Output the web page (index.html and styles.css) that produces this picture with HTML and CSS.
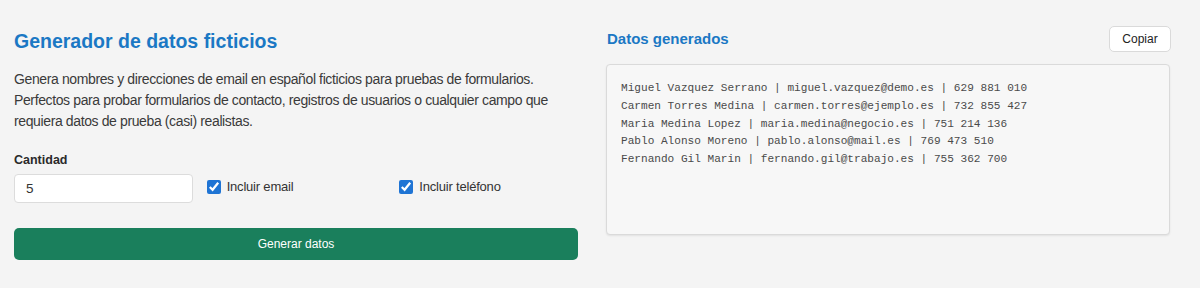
FILE: index.html
```html
<!DOCTYPE html>
<html lang="es">
<head>
<meta charset="utf-8">
<title>Generador de datos ficticios</title>
<link rel="stylesheet" href="styles.css">
</head>
<body>
<main class="page">
  <section class="form-col">
    <h1 class="title">Generador de datos ficticios</h1>
    <p class="intro">Genera nombres y direcciones de email en español ficticios para pruebas de formularios. Perfectos para probar formularios de contacto, registros de usuarios o cualquier campo que requiera datos de prueba (casi) realistas.</p>
    <label class="field-label" for="qty">Cantidad</label>
    <div class="controls">
      <input class="qty" id="qty" type="text" value="5">
      <label class="check"><input type="checkbox" checked><span>Incluir email</span></label>
      <label class="check"><input type="checkbox" checked><span>Incluir teléfono</span></label>
    </div>
    <button class="generate" type="button">Generar datos</button>
  </section>
  <section class="out-col">
    <div class="out-head">
      <h2 class="subtitle">Datos generados</h2>
      <button class="copy" type="button">Copiar</button>
    </div>
    <pre class="output">Miguel Vazquez Serrano | miguel.vazquez@demo.es | 629 881 010
Carmen Torres Medina | carmen.torres@ejemplo.es | 732 855 427
Maria Medina Lopez | maria.medina@negocio.es | 751 214 136
Pablo Alonso Moreno | pablo.alonso@mail.es | 769 473 510
Fernando Gil Marin | fernando.gil@trabajo.es | 755 362 700</pre>
  </section>
</main>
</body>
</html>
```

FILE: styles.css
```css
html, body {
  margin: 0;
  background: #f4f4f4;
}

body {
  font-family: "Liberation Sans", Arial, sans-serif;
  color: #333;
}

.page {
  display: grid;
  grid-template-columns: 564px 564px;
  column-gap: 28px;
  padding: 26px 0 0 14px;
}

.form-col {
  display: flex;
  flex-direction: column;
}

.title {
  margin: 3px 0 0;
  font-size: 19.5px;
  line-height: 24px;
  font-weight: 700;
  color: #1b78c4;
}

.intro {
  margin: 16px 0 0;
  font-size: 14px;
  line-height: 21px;
  letter-spacing: -0.38px;
  color: #3a3a3a;
}

.field-label {
  margin-top: 20px;
  font-size: 12.5px;
  line-height: 16px;
  font-weight: 700;
  color: #2a2a2a;
}

.controls {
  margin-top: 6px;
  display: grid;
  grid-template-columns: repeat(3, 1fr);
  column-gap: 14px;
  align-items: center;
}

.qty {
  box-sizing: border-box;
  width: 100%;
  height: 29px;
  margin: 0;
  padding: 0 11px;
  border: 1px solid #dcdcdc;
  border-radius: 4px;
  background: #fff;
  font-family: "Liberation Sans", Arial, sans-serif;
  font-size: 13.5px;
  color: #333;
  outline: none;
}

.check {
  display: flex;
  align-items: center;
  gap: 6px;
  margin-bottom: 4px;
  font-size: 13px;
  letter-spacing: -0.2px;
  color: #333;
}

.check input {
  width: 14px;
  height: 14px;
  margin: 0;
  accent-color: #1f74d4;
}

.generate {
  margin-top: 25px;
  height: 32px;
  border: 0;
  border-radius: 5px;
  background: #1a7f5c;
  color: #fff;
  font-family: "Liberation Sans", Arial, sans-serif;
  font-size: 12px;
}

.out-col {
  display: flex;
  flex-direction: column;
}

.out-head {
  display: flex;
  justify-content: space-between;
  align-items: center;
  margin-right: -1px;
}

.subtitle {
  margin: 0 0 0 1px;
  font-size: 15px;
  line-height: 18px;
  font-weight: 700;
  color: #1b78c4;
}

.copy {
  width: 62px;
  height: 26px;
  padding: 0;
  border: 1px solid #dadada;
  border-radius: 5px;
  background: #fff;
  color: #222;
  font-family: "Liberation Sans", Arial, sans-serif;
  font-size: 12px;
}

.output {
  box-sizing: border-box;
  height: 171px;
  margin: 12px 0 0;
  padding: 15px 14px 13px;
  border: 1px solid #dadada;
  border-radius: 4px;
  background: #f7f7f7;
  box-shadow: 0 1px 2px rgba(0, 0, 0, 0.08);
  font-family: "Liberation Mono", "Courier New", monospace;
  font-size: 11.1px;
  line-height: 17.75px;
  color: #4a4a4a;
  white-space: pre;
}
```
